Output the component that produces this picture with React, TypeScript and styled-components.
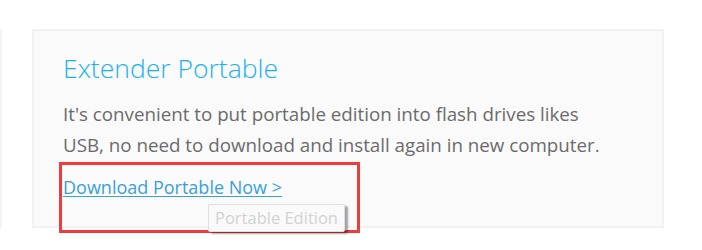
import styled, { createGlobalStyle } from "styled-components";

const GlobalStyle = createGlobalStyle`
	html, body {
		margin: 0;
		padding: 0;
		background: #ffffff;
	}
	body {
		font-family: "Open Sans", "Liberation Sans", sans-serif;
	}
`;

const Page = styled.div`
	display: flex;
	align-items: flex-start;
	padding-top: 29px;
	height: 250px;
	box-sizing: border-box;
`;

const PrevCardEdge = styled.div`
	width: 2px;
	height: 199px;
	background: #f3f3f3;
	margin-right: 30px;
`;

const Card = styled.section`
	position: relative;
	box-sizing: border-box;
	width: 632px;
	height: 199px;
	padding: 21px 29px 0;
	background: #fafafa;
	border: 2px solid #f2f2f2;
`;

const Title = styled.h2`
	margin: 0;
	font-size: 26.5px;
	font-weight: 300;
	line-height: 32px;
	color: #1bb1f0;
`;

const Description = styled.p`
	margin: 14px 0 0;
	max-width: 545px;
	font-size: 18.75px;
	line-height: 31px;
	color: #6b6b6b;
`;

const DownloadLink = styled.a`
	display: inline-block;
	margin-top: 15px;
	font-size: 18px;
	line-height: 24px;
	color: #3aa0d9;
	text-decoration: underline;
	text-underline-offset: 2px;
	cursor: pointer;
`;

const Highlight = styled.div`
	position: absolute;
	left: 25px;
	top: 131px;
	width: 301px;
	height: 71px;
	box-sizing: border-box;
	border: 3px solid #f03a3c;
	pointer-events: none;
`;

const Tooltip = styled.div`
	position: absolute;
	left: 174px;
	top: 173px;
	box-sizing: border-box;
	height: 28px;
	padding: 0 6px;
	font-size: 16.5px;
	line-height: 26px;
	color: #d2d2d2;
	background: #fafafa;
	border: 1px solid #dedede;
	border-radius: 2px;
	box-shadow: 3px 2px 2px rgba(0, 0, 0, 0.35);
	white-space: nowrap;
`;

export default function App() {
	return (
		<>
			<GlobalStyle />
			<Page>
				<PrevCardEdge />
				<Card>
					<Title>Extender Portable</Title>
					<Description>
						It&apos;s convenient to put portable edition into flash drives likes
						USB, no need to download and install again in new computer.
					</Description>
					<DownloadLink>Download Portable Now &gt;</DownloadLink>
					<Highlight />
					<Tooltip>Portable Edition</Tooltip>
				</Card>
			</Page>
		</>
	);
}
